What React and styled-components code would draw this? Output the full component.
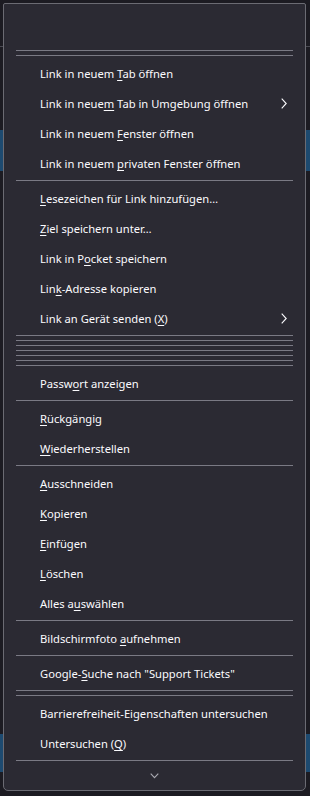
import React from "react";
import styled, { createGlobalStyle } from "styled-components";

const GlobalStyle = createGlobalStyle`
  html, body {
    margin: 0;
    padding: 0;
    background: #1c1b22;
  }
  body {
    font-family: "Noto Sans", "Open Sans", sans-serif;
  }
`;

const Page = styled.div`
  position: relative;
  width: 310px;
  height: 796px;
  overflow: hidden;
  background: #1c1b22;
`;

const Backdrop = styled.div`
  display: flex;
  flex-direction: column;
`;

const BgRow = styled.div`
  height: ${(p) => p.$h}px;
  background: ${(p) => p.$tone || "#1c1b22"};
  border-bottom: ${(p) => (p.$rule ? "1px solid #4a4a52" : "none")};
`;

const Menu = styled.div`
  position: absolute;
  top: 3px;
  left: 3px;
  width: 303px;
  height: 788px;
  box-sizing: border-box;
  background: #2b2a33;
  border: 1px solid #6b6b73;
  border-radius: 2px 2px 5px 5px;
  padding-top: 44px;
  display: flex;
  flex-direction: column;
  color: #fbfbfe;
  font-size: 11.2px;
`;

const Separator = styled.div`
  height: 5px;
  padding: 2px 12px;
  box-sizing: border-box;
  flex-shrink: 0;
  &::after {
    content: "";
    display: block;
    height: 1px;
    background: #7a7a84;
  }
`;

const Item = styled.div`
  height: 30px;
  flex-shrink: 0;
  display: flex;
  align-items: center;
  justify-content: space-between;
  padding: 0 18px 0 36px;
  white-space: nowrap;
  line-height: 1;
`;

const Label = styled.span`
  padding-top: 2px;
  u {
    text-decoration: underline;
    text-underline-offset: 2px;
    text-decoration-thickness: 1px;
  }
`;

const Arrow = styled.svg`
  width: 6px;
  height: 11px;
  display: block;
`;

const ScrollArea = styled.div`
  height: 27px;
  display: flex;
  align-items: center;
  justify-content: center;
  padding-bottom: 2px;
  box-sizing: border-box;
`;

const SubArrow = () => (
  <Arrow viewBox="0 0 6 11">
    <path d="M0.7 0.7 L5.2 5.5 L0.7 10.3" fill="none" stroke="#fbfbfe" strokeWidth="1.1" />
  </Arrow>
);

const Row = ({ children, sub }) => (
  <Item>
    <Label>{children}</Label>
    {sub && <SubArrow />}
  </Item>
);

export default function App() {
  return (
    <Page>
      <GlobalStyle />
      <Backdrop>
        <BgRow $h={46} $rule />
        <BgRow $h={83} />
        <BgRow $h={41} $tone="#1d4a70" />
        <BgRow $h={563} />
        <BgRow $h={38} $tone="#1d4a70" />
      </Backdrop>
      <Menu>
        <Separator />
        <Separator />
        <Row>Link in neuem <u>T</u>ab öffnen</Row>
        <Row sub>Link in neue<u>m</u> Tab in Umgebung öffnen</Row>
        <Row>Link in neuem <u>F</u>enster öffnen</Row>
        <Row>Link in neuem <u>p</u>rivaten Fenster öffnen</Row>
        <Separator />
        <Row><u>L</u>esezeichen für Link hinzufügen…</Row>
        <Row><u>Z</u>iel speichern unter…</Row>
        <Row>Link in P<u>o</u>cket speichern</Row>
        <Row>Lin<u>k</u>-Adresse kopieren</Row>
        <Row sub>Link an Gerät senden (<u>X</u>)</Row>
        <Separator />
        <Separator />
        <Separator />
        <Separator />
        <Separator />
        <Separator />
        <Separator />
        <Row>Passw<u>o</u>rt anzeigen</Row>
        <Separator />
        <Row><u>R</u>ückgängig</Row>
        <Row><u>W</u>iederherstellen</Row>
        <Separator />
        <Row><u>A</u>usschneiden</Row>
        <Row><u>K</u>opieren</Row>
        <Row><u>E</u>infügen</Row>
        <Row><u>L</u>öschen</Row>
        <Row>Alles a<u>u</u>swählen</Row>
        <Separator />
        <Row>Bildschirmfoto <u>a</u>ufnehmen</Row>
        <Separator />
        <Row>Google-<u>S</u>uche nach "Support Tickets"</Row>
        <Separator />
        <Separator />
        <Row>Barrierefreiheit-Eigenschaften untersuchen</Row>
        <Row>Untersuchen (<u>Q</u>)</Row>
        <Separator />
        <ScrollArea>
          <svg width="9" height="6" viewBox="0 0 9 6">
            <path d="M0.7 0.7 L4.5 4.6 L8.3 0.7" fill="none" stroke="#a9a9b2" strokeWidth="1.1" />
          </svg>
        </ScrollArea>
      </Menu>
    </Page>
  );
}
